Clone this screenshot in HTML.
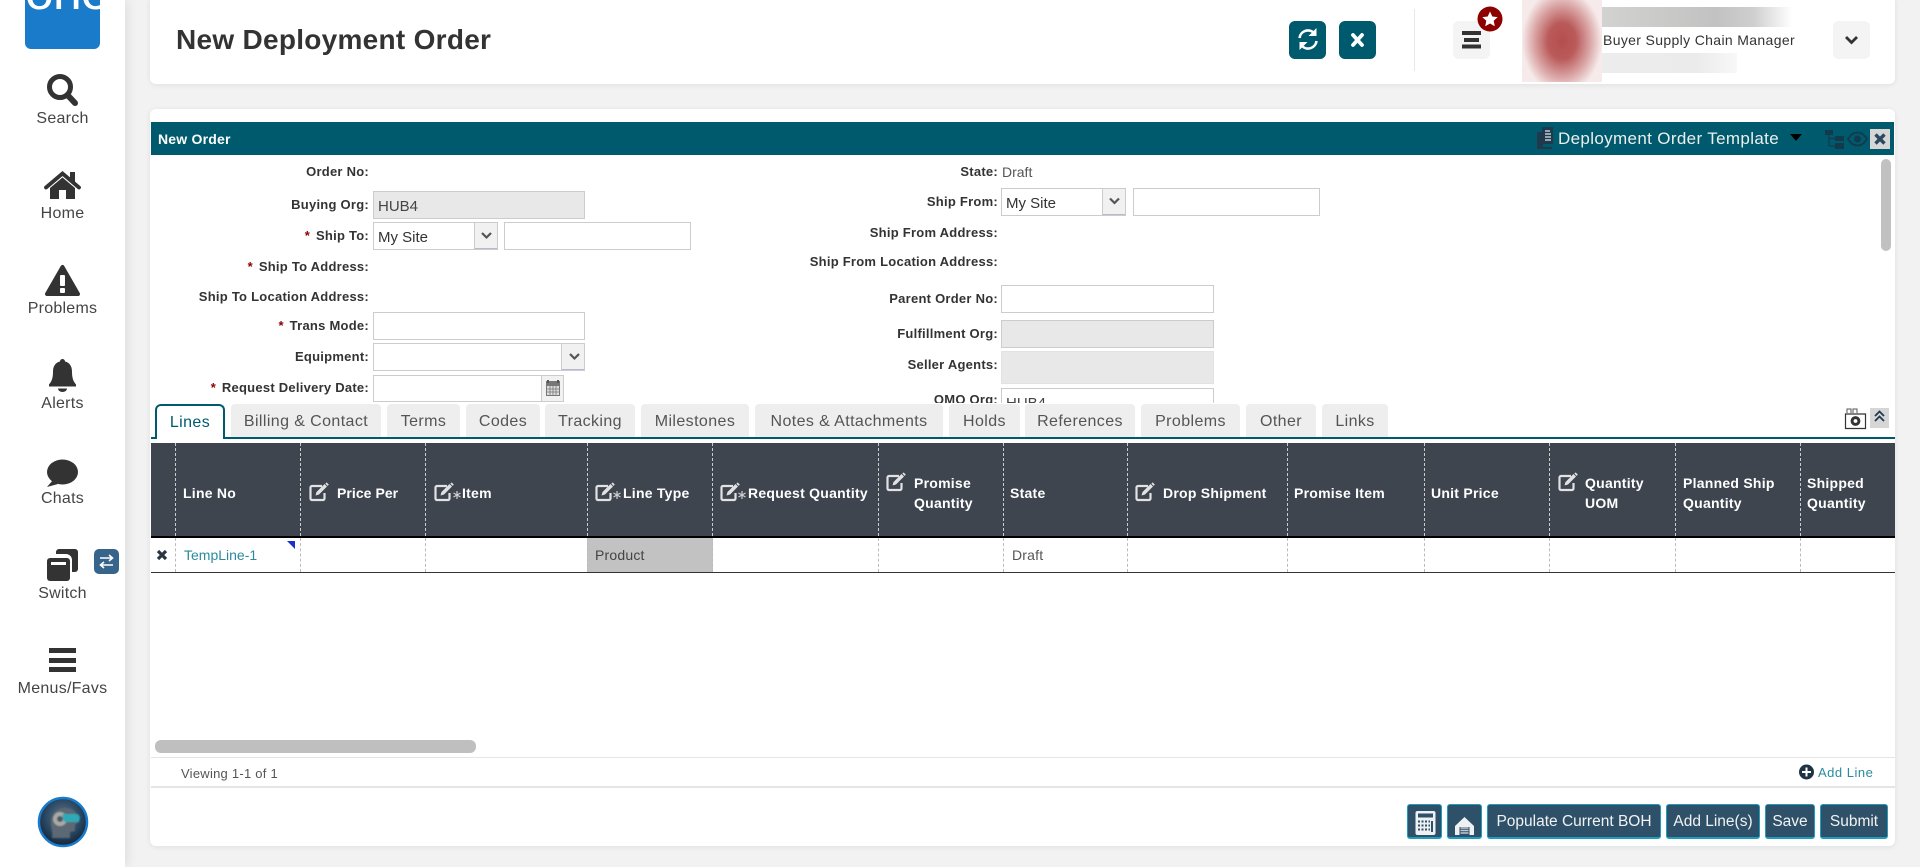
<!DOCTYPE html>
<html><head><meta charset="utf-8"><title>New Deployment Order</title>
<style>
*{box-sizing:border-box}
html,body{margin:0;padding:0;width:1920px;height:867px;overflow:hidden;background:#f2f2f2;font-family:"Liberation Sans",Arial,sans-serif;color:#333}
.a,.t,.l,.h,.tab,.i,.b{position:absolute}
.t,.l,.h{white-space:nowrap;line-height:20px}
.side{left:0;top:0;width:125px;height:867px;background:#fff;box-shadow:3px 0 10px rgba(0,0,0,.08)}
.nav{position:absolute;left:0;width:125px;text-align:center;font-size:16px;line-height:20px;color:#444;letter-spacing:.25px;transform:translateY(1px)}
.card{position:absolute;background:#fff;left:150px;width:1745px;box-shadow:0 1px 6px rgba(0,0,0,.08)}
.l{right:1551px;font-size:13px;font-weight:bold;letter-spacing:.25px;color:#333;transform:translateY(1px)}
.m{right:922px}
.l span{color:#8b0000;margin-right:2px}
.i{border:1px solid #ccc;background:#fff;height:28px;font-size:15px;line-height:29px;padding-left:4px;color:#444}
.g{background:#e9e8e8}
.sb{position:absolute;right:0;top:0;bottom:0;width:23px;background:#f1f1f1;border-left:1px solid #ccc;border-bottom:1px solid #b8b8d0}
.tab{top:404px;height:33px;background:#eee;border-radius:4px 4px 0 0;text-align:center;font-size:16px;letter-spacing:.4px;line-height:35px;color:#555;white-space:nowrap}
.h{color:#fff;font-weight:bold;font-size:14px;letter-spacing:.25px}
.b{top:804px;height:35px;background:#2e5068;border:1px solid #1f9dbf;border-bottom-width:2px;border-radius:3px;color:#f2f2f2;font-size:15.5px;line-height:33px;text-align:center;white-space:nowrap}
.d{position:absolute;width:0;border-left:1px dashed}
</style></head><body>
<div class="a side"></div>
<div class="a" style="left:25px;top:0;width:75px;height:49px;background:#1b7bcb;border-radius:0 0 6px 6px;overflow:hidden;color:#fff;font-size:52px;line-height:50px;text-align:center;letter-spacing:-1px"><span style="position:relative;top:-33px">one</span></div>
<div class="nav" style="top:108px">Search</div>
<div class="nav" style="top:203px">Home</div>
<div class="nav" style="top:298px">Problems</div>
<div class="nav" style="top:393px">Alerts</div>
<div class="nav" style="top:488px">Chats</div>
<div class="nav" style="top:583px">Switch</div>
<div class="nav" style="top:678px">Menus/Favs</div>

<div class="card" style="top:-5px;height:89px;border-radius:6px"></div>
<div class="t" style="left:176px;top:24px;font-size:28px;line-height:32px;font-weight:bold;letter-spacing:.28px;color:#333">New Deployment Order</div>
<div class="a" style="left:1289px;top:21px;width:37px;height:38px;background:#005a6e;border-radius:6px"></div>
<div class="a" style="left:1339px;top:21px;width:37px;height:38px;background:#005a6e;border-radius:6px"></div>
<div class="a" style="left:1414px;top:9px;width:1px;height:62px;background:#e8e8e8"></div>
<div class="a" style="left:1453px;top:21px;width:37px;height:38px;background:#f4f4f4;border-radius:6px"></div>
<div class="a" style="left:1833px;top:21px;width:37px;height:38px;background:#f4f4f4;border-radius:6px"></div>
<div class="a" style="left:1522px;top:0;width:80px;height:82px;background:radial-gradient(ellipse 40px 52px at 50% 50%,#b54e4e 0%,#ba5a5a 35%,#dca9a9 72%,#f6eaea 100%)"></div>
<div class="a" style="left:1602px;top:7px;width:190px;height:20px;background:linear-gradient(90deg,#d2d2d0,#c2c2c2 60%,#cfcfcf 80%,#fff)"></div>
<div class="a" style="left:1602px;top:53px;width:135px;height:20px;background:linear-gradient(90deg,#ececec,#ebebeb 70%,#f8f8f8)"></div>
<div class="t" style="left:1603px;top:30px;font-size:14px;letter-spacing:.35px;color:#333">Buyer Supply Chain Manager</div>

<div class="card" style="top:109px;height:737px;border-radius:6px"></div>
<div class="a" style="left:151px;top:122px;width:1743px;height:33px;background:#005a6e"></div>
<div class="t" style="left:158px;top:129px;font-size:14px;font-weight:bold;letter-spacing:.2px;color:#fff">New Order</div>
<div class="t" style="left:1558px;top:129px;font-size:17px;letter-spacing:.35px;color:#eee">Deployment Order Template</div>
<div class="a" style="left:1881px;top:159px;width:10px;height:92px;background:#c1c1c1;border-radius:5px"></div>

<div class="l" style="top:161px">Order No:</div>
<div class="l" style="top:194px">Buying Org:</div>
<div class="i g" style="left:373px;top:191px;width:212px">HUB4</div>
<div class="l" style="top:225px"><span>*</span> Ship To:</div>
<div class="i" style="left:373px;top:222px;width:125px;color:#333">My Site<div class="sb"></div></div>
<div class="i" style="left:504px;top:222px;width:187px"></div>
<div class="l" style="top:256px"><span>*</span> Ship To Address:</div>
<div class="l" style="top:286px">Ship To Location Address:</div>
<div class="l" style="top:315px"><span>*</span> Trans Mode:</div>
<div class="i" style="left:373px;top:312px;width:212px"></div>
<div class="l" style="top:346px">Equipment:</div>
<div class="i" style="left:373px;top:343px;width:212px"><div class="sb"></div></div>
<div class="l" style="top:377px"><span>*</span> Request Delivery Date:</div>
<div class="i" style="left:373px;top:375px;width:191px;height:27px"><div class="sb" style="border-bottom:0;width:22px"></div></div>

<div class="l m" style="top:161px">State:</div>
<div class="t" style="left:1002px;top:162px;font-size:14px;color:#555">Draft</div>
<div class="l m" style="top:191px">Ship From:</div>
<div class="i" style="left:1001px;top:188px;width:125px;color:#333">My Site<div class="sb"></div></div>
<div class="i" style="left:1133px;top:188px;width:187px"></div>
<div class="l m" style="top:222px">Ship From Address:</div>
<div class="l m" style="top:251px">Ship From Location Address:</div>
<div class="l m" style="top:288px">Parent Order No:</div>
<div class="i" style="left:1001px;top:285px;width:213px"></div>
<div class="l m" style="top:323px">Fulfillment Org:</div>
<div class="i g" style="left:1001px;top:320px;width:213px"></div>
<div class="l m" style="top:354px">Seller Agents:</div>
<div class="i g" style="left:1001px;top:351px;width:213px;height:33px;border-color:#e2e2e2"></div>
<div class="l m" style="top:389px">OMO Org:</div>
<div class="i" style="left:1001px;top:388px;width:213px">HUB4</div>
<div class="a" style="left:151px;top:403px;width:1743px;height:40px;background:#fff"></div>

<div class="a" style="left:151px;top:437px;width:1744px;height:2px;background:#005a6e"></div>
<div class="tab" style="left:155px;width:70px;height:35px;background:#fff;border:2px solid #005a6e;border-bottom:0;border-radius:6px 6px 0 0;color:#005a6e;line-height:33px;z-index:2">Lines</div>
<div class="tab" style="left:231px;width:150px">Billing &amp; Contact</div>
<div class="tab" style="left:387px;width:73px">Terms</div>
<div class="tab" style="left:466px;width:74px">Codes</div>
<div class="tab" style="left:545px;width:90px">Tracking</div>
<div class="tab" style="left:641px;width:108px">Milestones</div>
<div class="tab" style="left:755px;width:188px">Notes &amp; Attachments</div>
<div class="tab" style="left:949px;width:71px">Holds</div>
<div class="tab" style="left:1025px;width:110px">References</div>
<div class="tab" style="left:1141px;width:99px">Problems</div>
<div class="tab" style="left:1246px;width:70px">Other</div>
<div class="tab" style="left:1322px;width:66px">Links</div>

<div class="a" style="left:151px;top:443px;width:1744px;height:93px;background:#3e454f"></div>
<div class="a" style="left:151px;top:536px;width:1744px;height:2px;background:#000"></div>
<div class="a" style="left:151px;top:572px;width:1744px;height:1px;background:#333"></div>
<div class="a" style="left:587px;top:538px;width:126px;height:34px;background:#c2c2c2"></div>

<div class="d" style="left:175px;top:443px;height:93px;border-color:#ccc"></div><div class="d" style="left:175px;top:538px;height:34px;border-color:#bbb"></div>
<div class="d" style="left:300px;top:443px;height:93px;border-color:#ccc"></div><div class="d" style="left:300px;top:538px;height:34px;border-color:#bbb"></div>
<div class="d" style="left:425px;top:443px;height:93px;border-color:#ccc"></div><div class="d" style="left:425px;top:538px;height:34px;border-color:#bbb"></div>
<div class="d" style="left:587px;top:443px;height:93px;border-color:#ccc"></div><div class="d" style="left:587px;top:538px;height:34px;border-color:#bbb"></div>
<div class="d" style="left:712px;top:443px;height:93px;border-color:#ccc"></div><div class="d" style="left:712px;top:538px;height:34px;border-color:#bbb"></div>
<div class="d" style="left:878px;top:443px;height:93px;border-color:#ccc"></div><div class="d" style="left:878px;top:538px;height:34px;border-color:#bbb"></div>
<div class="d" style="left:1003px;top:443px;height:93px;border-color:#ccc"></div><div class="d" style="left:1003px;top:538px;height:34px;border-color:#bbb"></div>
<div class="d" style="left:1127px;top:443px;height:93px;border-color:#ccc"></div><div class="d" style="left:1127px;top:538px;height:34px;border-color:#bbb"></div>
<div class="d" style="left:1287px;top:443px;height:93px;border-color:#ccc"></div><div class="d" style="left:1287px;top:538px;height:34px;border-color:#bbb"></div>
<div class="d" style="left:1424px;top:443px;height:93px;border-color:#ccc"></div><div class="d" style="left:1424px;top:538px;height:34px;border-color:#bbb"></div>
<div class="d" style="left:1549px;top:443px;height:93px;border-color:#ccc"></div><div class="d" style="left:1549px;top:538px;height:34px;border-color:#bbb"></div>
<div class="d" style="left:1675px;top:443px;height:93px;border-color:#ccc"></div><div class="d" style="left:1675px;top:538px;height:34px;border-color:#bbb"></div>
<div class="d" style="left:1800px;top:443px;height:93px;border-color:#ccc"></div><div class="d" style="left:1800px;top:538px;height:34px;border-color:#bbb"></div>

<div class="h" style="left:183px;top:483px">Line No</div>
<div class="h" style="left:337px;top:483px;letter-spacing:.05px">Price Per</div>
<div class="h" style="left:462px;top:483px">Item</div>
<div class="h" style="left:623px;top:483px">Line Type</div>
<div class="h" style="left:748px;top:483px">Request Quantity</div>
<div class="h" style="left:914px;top:473px">Promise</div><div class="h" style="left:914px;top:493px">Quantity</div>
<div class="h" style="left:1010px;top:483px">State</div>
<div class="h" style="left:1163px;top:483px">Drop Shipment</div>
<div class="h" style="left:1294px;top:483px">Promise Item</div>
<div class="h" style="left:1431px;top:483px">Unit Price</div>
<div class="h" style="left:1585px;top:473px">Quantity</div><div class="h" style="left:1585px;top:493px">UOM</div>
<div class="h" style="left:1683px;top:473px">Planned Ship</div><div class="h" style="left:1683px;top:493px">Quantity</div>
<div class="h" style="left:1807px;top:473px">Shipped</div><div class="h" style="left:1807px;top:493px">Quantity</div>

<div class="t" style="left:184px;top:545px;font-size:14px;color:#2b8a9e">TempLine-1</div>
<div class="t" style="left:595px;top:545px;font-size:14px;letter-spacing:.2px;color:#444">Product</div>
<div class="t" style="left:1012px;top:545px;font-size:14px;letter-spacing:.2px;color:#555">Draft</div>

<div class="a" style="left:155px;top:740px;width:321px;height:13px;background:#bfbfbf;border-radius:6px"></div>
<div class="a" style="left:151px;top:757px;width:1744px;height:1px;background:#e5e5e5"></div>
<div class="a" style="left:151px;top:786px;width:1744px;height:2px;background:#e5e5e5"></div>
<div class="t" style="left:181px;top:764px;font-size:13px;letter-spacing:.25px;color:#555">Viewing 1-1 of 1</div>
<div class="t" style="left:1818px;top:763px;font-size:13px;letter-spacing:.5px;color:#2b8a9e">Add Line</div>

<div class="b" style="left:1407px;width:35px"></div>
<div class="b" style="left:1447px;width:35px"></div>
<div class="b" style="left:1487px;width:174px">Populate Current BOH</div>
<div class="b" style="left:1666px;width:94px">Add Line(s)</div>
<div class="b" style="left:1765px;width:50px">Save</div>
<div class="b" style="left:1820px;width:68px">Submit</div>

<svg class="a" style="left:0;top:0;z-index:5" width="1920" height="867" viewBox="0 0 1920 867" xmlns="http://www.w3.org/2000/svg">
<defs>
<g id="ed" fill="none" stroke="#e2e2e2">
<path d="M13 3H3a1.5 1.5 0 0 0-1.5 1.5v11A1.500 1.500 0 0 0 3 17h11a1.500 1.500 0 0 0 1.500-1.500V10" stroke-width="2.200"/>
<path d="M6.500 12.500l1-3.500 8-8 2.500 2.500-8 8z" fill="#e2e2e2" stroke="none"/>
<path d="M17 0l2.200 2.200" stroke-width="1.800"/>
</g>
<g id="st" stroke="#cfcfcf" stroke-width="1.200"><path d="M4 0v8M.5 2l7 4M.5 6l7-4"/></g>
<radialGradient id="av" cx=".5" cy=".4" r=".65"><stop offset="0" stop-color="#5f7688"/><stop offset=".6" stop-color="#27445f"/><stop offset="1" stop-color="#0c1e30"/></radialGradient>
<filter id="bl"><feGaussianBlur stdDeviation=".7"/></filter>
</defs>
<!-- sidebar -->
<circle cx="60" cy="87" r="10.500" fill="none" stroke="#333" stroke-width="5"/>
<path d="M67.500 95l7.500 8" stroke="#333" stroke-width="6" stroke-linecap="round"/>
<path d="M46 187.500l16.500-14 16.500 14" fill="none" stroke="#333" stroke-width="3.800" stroke-linecap="round"/>
<path d="M70 172h5v11l-5-4z" fill="#333"/>
<path d="M50 188l12.500-10.500L75 188v11H66v-9h-7v9h-9z" fill="#333"/>
<path d="M62.500 267L47 294h31z" fill="#333" stroke="#333" stroke-width="4" stroke-linejoin="round"/>
<rect x="60" y="275" width="5" height="11" rx="1" fill="#fff"/><rect x="60" y="288" width="5" height="5" rx="1" fill="#fff"/>
<path d="M62.500 359a2.500 2.500 0 0 1 2.500 2.500c5 1 7 5.500 7 10 0 7 1.500 10 4 13v2H49v-2c2.500-3 4-6 4-13 0-4.500 2-9 7-10a2.500 2.500 0 0 1 2.500-2.500z" fill="#333"/>
<path d="M58 388.500h9a4.500 3.500 0 0 1-9 0z" fill="#333"/>
<ellipse cx="62.500" cy="472" rx="15.500" ry="12.500" fill="#333"/>
<path d="M53 480l-6 7 11-3z" fill="#333"/>
<path d="M59 549h16a3 3 0 0 1 3 3v17a3 3 0 0 1-3 3h-3v-12a6 6 0 0 0-6-6H56v-2a3 3 0 0 1 3-3z" fill="#333"/>
<rect x="47" y="558" width="23" height="23" rx="3" fill="#333"/><rect x="51" y="562" width="15" height="3" fill="#fff"/>
<rect x="94" y="549" width="25" height="25" rx="5" fill="#37648a"/>
<path d="M100 558h12M109 555l3.500 3-3.500 3M113 565h-12M104 562l-3.500 3 3.500 3" fill="none" stroke="#fff" stroke-width="1.600"/>
<rect x="49" y="648" width="27" height="5" fill="#333"/><rect x="49" y="658" width="27" height="5" fill="#333"/><rect x="49" y="667" width="27" height="5" fill="#333"/>
<circle cx="63" cy="822" r="24" fill="url(#av)" stroke="#1b7bcb" stroke-width="2.500"/>
<g filter="url(#bl)">
<path d="M52 838c1-6-1-9-1-15 0-9 6-15 14-15 5 0 9 2 11 5l2 9-3 3v6l-5 1v6z" fill="#5b6873"/>
<circle cx="60" cy="819" r="7" fill="#a9aaa4"/><circle cx="60" cy="819" r="3" fill="#4a5a64"/>
<path d="M62 814h16l2 3-1 5H64z" fill="#2fa9b8"/>
</g>
<!-- top buttons -->
<path d="M1299.500 38a8.500 8.500 0 0 1 14.500-5" fill="none" stroke="#fff" stroke-width="2.600"/><path d="M1316.500 28v8h-8z" fill="#fff"/>
<path d="M1316.500 41a8.500 8.500 0 0 1-14.500 5" fill="none" stroke="#fff" stroke-width="2.600"/><path d="M1299.500 50v-8h8z" fill="#fff"/>
<path d="M1353 35l9 10M1362 35l-9 10" stroke="#fff" stroke-width="3.800" stroke-linecap="round"/>
<rect x="1462" y="31" width="19" height="4" fill="#333"/><rect x="1464" y="38" width="15" height="4" fill="#333"/><rect x="1462" y="44.500" width="19" height="4" fill="#333"/>
<circle cx="1490" cy="19" r="12.500" fill="#8c0000"/>
<path d="M1490 11.500l2.300 5 5.400.6-4 3.700 1.100 5.400-4.800-2.700-4.800 2.700 1.100-5.400-4-3.700 5.400-.6z" fill="#fff"/>
<path d="M1846 37l5.500 5.500 5.500-5.500" fill="none" stroke="#333" stroke-width="2.800"/>
<!-- header bar icons -->
<path d="M1537 132h6v15h9v2h-15z" fill="#1e3a4c"/>
<rect x="1542" y="127" width="11" height="17" fill="#1e3a4c"/>
<path d="M1545 131h5M1545 134h6M1545 137h6M1545 140h6" stroke="#dfe6e8" stroke-width="1.200"/>
<path d="M1790 134h12l-6 7z" fill="#000"/>
<path d="M1825 130h8v5h-8zM1835 136h9v5h-9zM1835 143h9v6h-9z" fill="#133a4c"/>
<path d="M1829 135v11h6M1829 138.500h6" fill="none" stroke="#133a4c" stroke-width="1.200"/>
<path d="M1848 139c3-5 6-6.500 9.500-6.500s6.500 1.500 9.500 6.500c-3 5-6 6.500-9.500 6.500s-6.500-1.500-9.500-6.500z" fill="none" stroke="#133a4c" stroke-width="1.800"/>
<circle cx="1857.500" cy="139" r="3.500" fill="#133a4c"/>
<rect x="1870" y="129" width="20" height="20" fill="#d6d6d6"/>
<path d="M1875.500 134.500l9 9M1884.500 134.500l-9 9" stroke="#2a4a60" stroke-width="3.400"/>
<!-- select arrows -->
<path d="M482 233l4.500 4.500 4.500-4.500M570 354l4.500 4.500 4.500-4.500M1110 198.500l4.500 4.500 4.500-4.500" fill="none" stroke="#555" stroke-width="2.200"/>
<!-- calendar -->
<rect x="546" y="381" width="14" height="15" fill="#777"/>
<path d="M548 380v3M558 380v3" stroke="#555" stroke-width="2"/>
<path d="M547 386h12v9h-12z" fill="#ddd"/>
<path d="M547 389h12M547 392h12M550 386v9M553 386v9M556 386v9" stroke="#777" stroke-width=".8"/>
<!-- tab tools -->
<path d="M1845.500 414h20v14.500h-20z" fill="#fff" stroke="#333" stroke-width="1.200"/>
<path d="M1847 413v-4h4v4M1853 413v-4h4v4" fill="none" stroke="#555" stroke-width="1"/>
<circle cx="1855.500" cy="421" r="3.400" fill="none" stroke="#333" stroke-width="3"/>
<rect x="1870" y="408" width="19" height="20" fill="#d6d6d6"/>
<path d="M1875 416l4.500-4.500 4.500 4.500M1875 421l4.500-4.500 4.500 4.500" fill="none" stroke="#1e3a50" stroke-width="1.800"/>
<!-- header edit icons -->
<use href="#ed" x="309" y="483"/>
<use href="#ed" x="434" y="483"/><use href="#st" x="453" y="491"/>
<use href="#ed" x="595" y="483"/><use href="#st" x="613" y="491"/>
<use href="#ed" x="720" y="483"/><use href="#st" x="738" y="491"/>
<use href="#ed" x="886" y="473"/>
<use href="#ed" x="1135" y="483"/>
<use href="#ed" x="1558" y="473"/>
<!-- row -->
<path d="M158 551l8 8M166 551l-8 8" stroke="#2a3542" stroke-width="3.200"/>
<path d="M287 541h8v8z" fill="#1c2fd0"/>
<!-- add line -->
<circle cx="1806.500" cy="772" r="7.500" fill="#1e3344"/>
<path d="M1802 772h9M1806.500 767.500v9" stroke="#fff" stroke-width="2"/>
<!-- calc -->
<rect x="1415.500" y="811" width="20" height="24" rx="2" fill="#eef0f2"/>
<rect x="1418" y="813.500" width="15" height="4" fill="#2e5068"/>
<path d="M1418 821.500h12M1418 825.500h12M1418 829.500h12" stroke="#2e5068" stroke-width="2" stroke-dasharray="2 1.500"/>
<rect x="1431" y="821" width="2" height="11" fill="#2e5068"/>
<!-- garage -->
<path d="M1455 826l9.500-9 9.500 9v9h-4.500v-8h-10v8h-4.500z" fill="#eef0f2"/>
<path d="M1460.500 828h8M1460.500 830.500h8M1460.500 833h8" stroke="#c2cad0" stroke-width="1.400"/>
</svg>
</body></html>
